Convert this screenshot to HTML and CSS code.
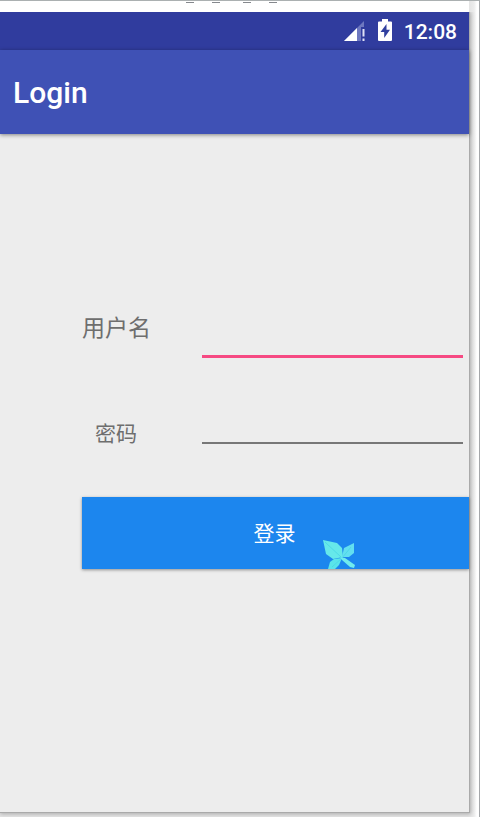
FILE: index.html
```html
<!DOCTYPE html>
<html lang="zh-CN">
<head>
  <meta charset="UTF-8">
  <meta name="viewport" content="width=device-width, initial-scale=1.0">
  <title>Login</title>
  <link rel="stylesheet" href="styles.css">
</head>
<body>
  <div class="window">
    <div class="window-bar">
      <span class="mark"></span>
      <span class="mark"></span>
      <span class="mark"></span>
      <span class="mark"></span>
    </div>

    <div class="phone">
      <div class="status-bar">
        <svg class="signal" width="22" height="20" viewBox="0 0 22 20">
          <path d="M0 20 L20 0 V6 H17 V20 Z" fill="#6e78c0"/>
          <path d="M0 20 L13 7 V20 Z" fill="#fff"/>
          <path d="M18.5 8 H20.5 V15.5 H18.5 Z M18.5 17.5 H20.5 V20 H18.5 Z" fill="#dfe2f5"/>
        </svg>
        <svg class="battery" width="14" height="22" viewBox="0 0 14 22">
          <path d="M4 0 H10 V2.5 H13 Q14 2.5 14 3.5 V21 Q14 22 13 22 H1 Q0 22 0 21 V3.5 Q0 2.5 1 2.5 H4 Z" fill="#fff"/>
          <path d="M8.5 5 L2.5 13 H6.2 V19 L12 10.8 H8.5 Z" fill="#303f9f"/>
        </svg>
        <span class="clock">12:08</span>
      </div>

      <div class="app-bar">
        <h1>Login</h1>
      </div>

      <form class="login-form">
        <div class="field username">
          <label for="username">用户名</label>
          <input type="text" id="username">
        </div>
        <div class="field password">
          <label for="password">密码</label>
          <input type="password" id="password">
        </div>
        <button type="button" class="login-button">
          <span>登录</span>
          <svg class="cursor" width="33" height="31" viewBox="0 0 33 31">
            <path d="M0 0 L14 3 L19 8 L20 17 L10 19 L3 14 Z" fill="#66e8ea"/>
            <path d="M19 17 L21 8 L31 3 L31 13 L26 17 Z" fill="#62dff0"/>
            <path d="M19 18 L16 25 L12 29 H5 L7 22 L11 19 Z" fill="#5ae4ea"/>
            <path d="M2 2 L19 18 L28 7 M19 18 L9 27" fill="none" stroke="#48d6e4" stroke-width="0.8"/>
            <path d="M17 17 L22 18 L32 25 L31 28 L27 27 L19 20 Z" fill="#70ebed"/>
          </svg>
        </button>
      </form>
    </div>
  </div>
</body>
</html>
```

FILE: styles.css
```css
* {
  box-sizing: border-box;
}
body {
  margin: 0;
  background: #fff;
  font-family: Roboto, "Noto Sans CJK SC", sans-serif;
}
.window {
  width: 480px;
  height: 817px;
  overflow: hidden;
  border-top: 1px solid #abb0b1;
  border-right: 1px solid #a5a7aa;
  background: linear-gradient(to right, #e4e4e4 469px, #ececec 474px, #fff 477px);
}
.window-bar {
  display: flex;
  gap: 18px;
  width: 469px;
  height: 11px;
  padding: 1px 0 0 186px;
  background: #fff;
}
.mark {
  width: 8px;
  height: 1px;
  background: #85888d;
}
.mark:nth-child(3) {
  margin-left: 5px;
}
.phone {
  width: 469px;
  height: 800px;
  background: #ededed;
  box-shadow: 0 0 0 1px #aaa, 1px 1px 4px 1px rgba(0, 0, 0, 0.25);
  clip-path: inset(0 -9px -5px 0);
}
.status-bar {
  display: flex;
  align-items: center;
  justify-content: flex-end;
  height: 38px;
  padding-right: 12px;
  background: #303c9e;
  color: #fff;
}
.signal {
  margin-right: 12px;
}
.battery {
  margin: -3px 12px 0 0;
}
.clock {
  padding-top: 2px;
  font-size: 21px;
  font-weight: 500;
}
.app-bar {
  display: flex;
  align-items: center;
  height: 84px;
  padding-left: 13px;
  background: #3f51b5;
  box-shadow: 0 1px 4px rgba(0, 0, 0, 0.45);
  color: #fff;
}
.app-bar h1 {
  margin: 0;
  font-size: 30px;
  font-weight: 500;
}
.login-form {
  padding: 163px 0 0 82px;
}
.field {
  display: flex;
  align-items: flex-start;
  height: 61px;
  padding-right: 6px;
  color: #6e6e6e;
}
.field label {
  width: 120px;
  line-height: 64px;
  font-size: 23px;
}
.field input {
  width: 261px;
  height: 61px;
  padding: 0;
  border: 0;
  border-bottom: 3px solid #f64a83;
  outline: none;
  background: transparent;
  font-size: 23px;
}
.password {
  margin-top: 25px;
}
.password label {
  padding-left: 13px;
  line-height: 103px;
  font-size: 21px;
}
.password input {
  border-bottom: 2px solid #777;
}
.login-button {
  position: relative;
  display: block;
  width: 387px;
  height: 72px;
  margin-top: 53px;
  padding: 0 2px 2px 0;
  border: 0;
  background: #1c86ee;
  box-shadow: 0 1px 3px rgba(0, 0, 0, 0.4);
  color: #fff;
  font-family: inherit;
  font-size: 21px;
  font-weight: 400;
}
/* leaf pointer over the button */
.cursor {
  position: absolute;
  left: 241px;
  top: 43px;
}
```
